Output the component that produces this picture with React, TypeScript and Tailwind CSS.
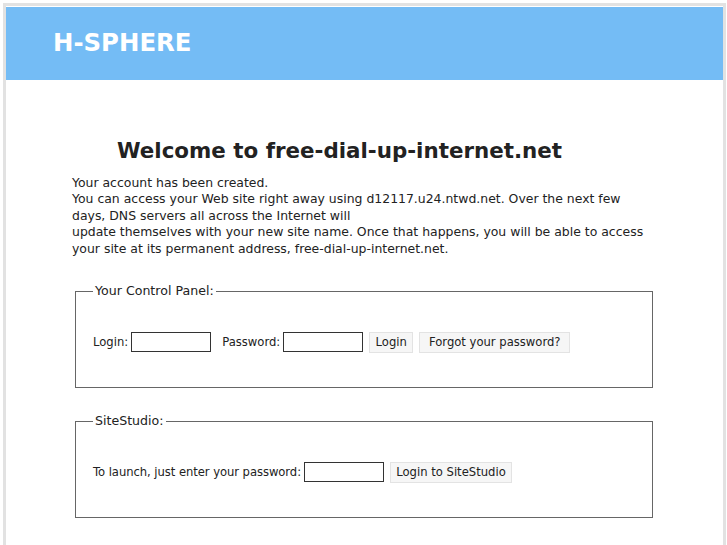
import { FC } from "react";

const font = { fontFamily: '"DejaVu Sans", Verdana, sans-serif' };

// Small grey button like the browser default
const Btn: FC<{ label: string; w: string }> = ({ label, w }) => (
  <button
    className={`h-[21px] ${w} border border-[#e3e3e3] bg-[#f6f6f6] text-[11.6px] text-[#222]`}
    style={font}
  >
    {label}
  </button>
);

const Field: FC = () => (
  <input
    type="text"
    className="h-[20px] w-[80px] border border-[#333] bg-white px-1 text-[12px]"
  />
);

const App: FC = () => {
  return (
    <div className="min-h-[545px] bg-white" style={font}>
      <div className="ml-[3px] mt-[3px] min-h-[542px] w-[723px] border-x-[3px] border-t-[3px] border-[#e2e2e2]">
        {/* Header */}
        <div className="mt-px flex h-[73px] items-center bg-[#74bcf5] pl-[47px]">
          <span className="text-[24.4px] font-bold text-white">H-SPHERE</span>
        </div>

        {/* Content */}
        <div className="pl-[66px] pt-[56px] text-[12.45px] text-[#222]">
          <h1 className="w-[535px] text-center text-[21.4px] font-bold leading-[30px] text-[#222]">
            Welcome to free-dial-up-internet.net
          </h1>
          <p className="mt-[9px] w-[576px] leading-[16.4px]">
            Your account has been created.
            <br />
            You can access your Web site right away using d12117.u24.ntwd.net.
            Over the next few days, DNS servers all across the Internet will
            <br />
            update themselves with your new site name. Once that happens, you
            will be able to access your site at its permanent address,
            free-dial-up-internet.net.
          </p>

          <fieldset className="ml-[3px] mt-[25px] h-[106px] w-[578px] border border-[#666] px-[17px] text-[11.6px]">
            <legend className="px-[2px] text-[12.6px] text-[#222]">
              Your Control Panel:
            </legend>
            <div className="mt-[31px] flex items-center">
              <span>Login:</span>
              <span className="ml-[3px]">
                <Field />
              </span>
              <span className="ml-[11px]">Password:</span>
              <span className="ml-[3px]">
                <Field />
              </span>
              <span className="ml-[6px]">
                <Btn label="Login" w="w-[44px]" />
              </span>
              <span className="ml-[6px]">
                <Btn label="Forgot your password?" w="w-[151px]" />
              </span>
            </div>
          </fieldset>

          <fieldset className="ml-[3px] mt-[24px] h-[106px] w-[578px] border border-[#666] px-[17px] text-[11.6px]">
            <legend className="px-[2px] text-[12.6px] text-[#222]">
              SiteStudio:
            </legend>
            <div className="mt-[31px] flex items-center">
              <span className="tracking-[-0.06px]">
                To launch, just enter your password:
              </span>
              <span className="ml-[3px]">
                <Field />
              </span>
              <span className="ml-[6px]">
                <Btn label="Login to SiteStudio" w="w-[122px]" />
              </span>
            </div>
          </fieldset>
        </div>
      </div>
    </div>
  );
};

export default App;
